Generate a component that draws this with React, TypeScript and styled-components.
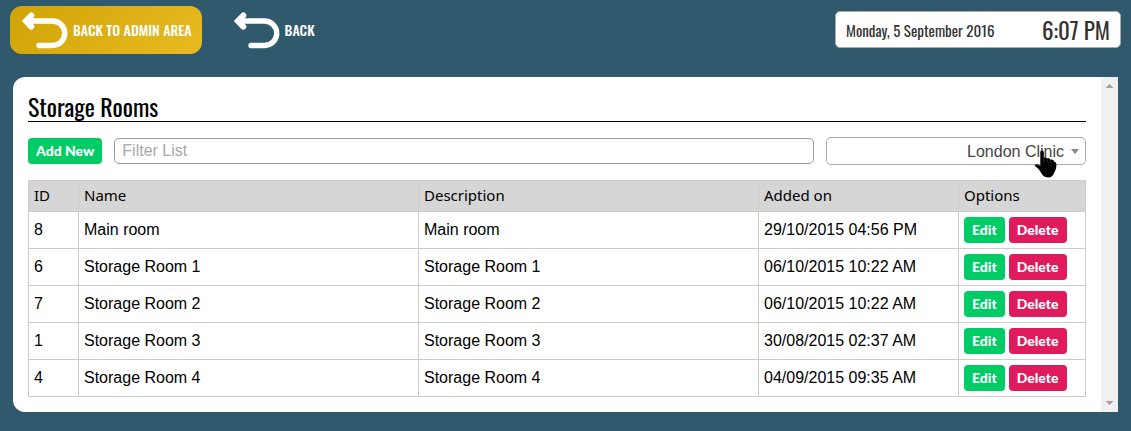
import React from "react";
import styled, { createGlobalStyle } from "styled-components";

const display = `Oswald, "Roboto Condensed", "Liberation Sans Narrow", "Liberation Sans", sans-serif`;
const humanist = `"Noto Sans", "Open Sans", sans-serif`;

const Global = createGlobalStyle`
  * { box-sizing: border-box; }
  body { margin: 0; background: #30596d; color: #000; font: 16px/20px "Liberation Sans", sans-serif; }
`;
const Header = styled.header`
  display: flex;
  align-items: flex-start;
  gap: 20px;
  padding: 6px 10px 0;
`;
const NavButton = styled.button<{ $active?: boolean }>`
  display: flex;
  align-items: center;
  gap: 5px;
  height: 48px;
  padding: 0 10px 0 12px;
  border: 0;
  border-radius: 12px;
  background: ${(p) => (p.$active ? "linear-gradient(135deg, #d0a307, #e8bb20)" : "transparent")};
  color: #fff;
  font: 500 14px/24px ${display};
  text-transform: uppercase;
  white-space: nowrap;
`;
const Clock = styled.div`
  display: flex;
  align-items: center;
  justify-content: space-between;
  width: 286px;
  height: 37px;
  margin: 5px 0 0 auto;
  padding: 0 10px;
  border: 1px solid #aaa;
  border-radius: 5px;
  background: #fff;
  color: #333;
  font: 15px/24px ${display};
`;
const Time = styled.time`
  font-size: 23px;
`;
const Panel = styled.main`
  display: flex;
  margin: 23px 13px 19px;
  border-radius: 12px 0 0 12px;
  background: #fff;
`;
const Content = styled.section`
  flex: 1;
  min-width: 0;
  padding: 15px;
`;
const Title = styled.h1`
  margin: 0 0 15px;
  border-bottom: 1px solid #000;
  font: 400 24px/29px ${display};
`;
const ScrollTrack = styled.div`
  display: flex;
  flex-direction: column;
  justify-content: space-between;
  align-items: center;
  width: 17px;
  padding: 7px 0;
  background: #f0f0f0;
`;
const Toolbar = styled.div`
  display: flex;
  align-items: center;
  gap: 12px;
  margin-bottom: 15px;
`;
const Action = styled.button<{ $danger?: boolean }>`
  height: 26px;
  padding: 0 8px;
  border: 0;
  border-radius: 4px;
  background: ${(p) => (p.$danger ? "#e01b5d" : "#00cc66")};
  color: #fff;
  font: 900 14px/26px Lato, ${humanist};
  white-space: nowrap;
`;
const Filter = styled.input`
  flex: 1;
  min-width: 0;
  height: 26px;
  padding: 0 7px;
  border: 1px solid #999;
  border-radius: 5px;
  font: 16px/24px "Liberation Sans", sans-serif;
  &::placeholder { color: #a9a9a9; opacity: 1; }
`;
const ClinicField = styled.div`
  position: relative;
  width: 260px;
`;
const ClinicSelect = styled.select`
  display: block;
  appearance: none;
  width: 100%;
  height: 28px;
  padding: 1px 21px 0 8px;
  border: 1px solid #aaa;
  border-radius: 5px;
  background: #fff;
  color: #444;
  font: 16px/26px "Liberation Sans", sans-serif;
  text-align: right;
  text-align-last: right;
`;
const Caret = styled.svg`
  position: absolute;
  top: 12px;
  right: 7px;
  pointer-events: none;
`;
const Pointer = styled.svg`
  position: absolute;
  top: 12px;
  right: 29px;
  pointer-events: none;
`;
const Table = styled.table`
  width: 100%;
  border-collapse: collapse;
  table-layout: fixed;
`;
const Th = styled.th<{ $w?: string }>`
  width: ${(p) => p.$w ?? "auto"};
  height: 31px;
  padding: 0 5px 2px;
  border: 1px solid #ccc;
  background: #d6d6d6;
  font: 400 15px/20px ${humanist};
  text-align: left;
`;
const Td = styled.td`
  height: 37px;
  padding: 0 5px;
  border: 1px solid #ccc;
`;
const Actions = styled.div`
  display: flex;
  gap: 4px;
`;

const ReturnArrow = () => (
  <svg width="46" height="37" viewBox="0 0 46 37" fill="none" stroke="#fff" strokeLinecap="round" aria-hidden="true">
    <path d="M8 9H30.500A12.200 12.200 0 0 1 30.500 33.500H17" strokeWidth="5.400" />
    <path d="M9.300 3.500L4 9L9.300 14.600" strokeWidth="6" strokeLinejoin="miter" fill="#fff" />
  </svg>
);
const ScrollArrow = ({ down }: { down?: boolean }) => (
  <svg width="7" height="4" viewBox="0 0 7 4" fill="#a3a3a3" shapeRendering="crispEdges" aria-hidden="true">
    <path d={down ? "M0 0H7V1H6V2H5V3H4V4H3V3H2V2H1V1H0Z" : "M0 4H7V3H6V2H5V1H4V0H3V1H2V2H1V3H0Z"} />
  </svg>
);

const rooms = [
  { id: 8, name: "Main room", added: "29/10/2015 04:56 PM" },
  { id: 6, name: "Storage Room 1", added: "06/10/2015 10:22 AM" },
  { id: 7, name: "Storage Room 2", added: "06/10/2015 10:22 AM" },
  { id: 1, name: "Storage Room 3", added: "30/08/2015 02:37 AM" },
  { id: 4, name: "Storage Room 4", added: "04/09/2015 09:35 AM" },
];

export default function App() {
  return (
    <>
      <Global />
      <Header>
        <NavButton $active><ReturnArrow />Back to admin area</NavButton>
        <NavButton><ReturnArrow />Back</NavButton>
        <Clock><span>Monday, 5 September 2016</span><Time>6:07 PM</Time></Clock>
      </Header>
      <Panel>
        <Content>
          <Title>Storage Rooms</Title>
          <Toolbar>
            <Action>Add New</Action>
            <Filter placeholder="Filter List" aria-label="Filter List" />
            <ClinicField>
              <ClinicSelect aria-label="Clinic"><option>London Clinic</option></ClinicSelect>
              <Caret width="8" height="5" viewBox="0 0 8 5" fill="#888"><path d="M0 0H8L4 5Z" /></Caret>
              <Pointer width="23" height="30" viewBox="0 0 23 30">
                <path d="M8 1.500C9.300 1.500 9.800 2.400 9.800 3.600V8.500C11 7.900 12.700 8.200 13 9.500C14.500 8.900 16.200 9.500 16.500 10.800C18 10.200 19.800 11 20 12.500C21.800 12.800 22.500 14 22.400 16C22.300 19 21.700 21 20.500 23C19.500 26.500 17.500 28.500 14.500 28.500C11 28.500 9 27 7.500 24.500C6 21.500 4.500 19.500 1.500 17.500C0 16.300 1 15 3 15.200C4.500 15.400 5.500 16 6.300 17V3.600C6.300 2.400 6.800 1.500 8 1.500Z" fill="#000" />
                <path d="M9.800 8.500V13M13.200 9.500V13.500M16.600 11V14" stroke="#555" strokeWidth="0.500" />
              </Pointer>
            </ClinicField>
          </Toolbar>
          <Table>
            <thead>
              <tr><Th $w="50px">ID</Th><Th>Name</Th><Th>Description</Th><Th $w="200px">Added on</Th><Th $w="127px">Options</Th></tr>
            </thead>
            <tbody>
              {rooms.map((r) => (
                <tr key={r.id}>
                  <Td>{r.id}</Td><Td>{r.name}</Td><Td>{r.name}</Td><Td>{r.added}</Td>
                  <Td><Actions><Action>Edit</Action><Action $danger>Delete</Action></Actions></Td>
                </tr>
              ))}
            </tbody>
          </Table>
        </Content>
        <ScrollTrack><ScrollArrow /><ScrollArrow down /></ScrollTrack>
      </Panel>
    </>
  );
}
